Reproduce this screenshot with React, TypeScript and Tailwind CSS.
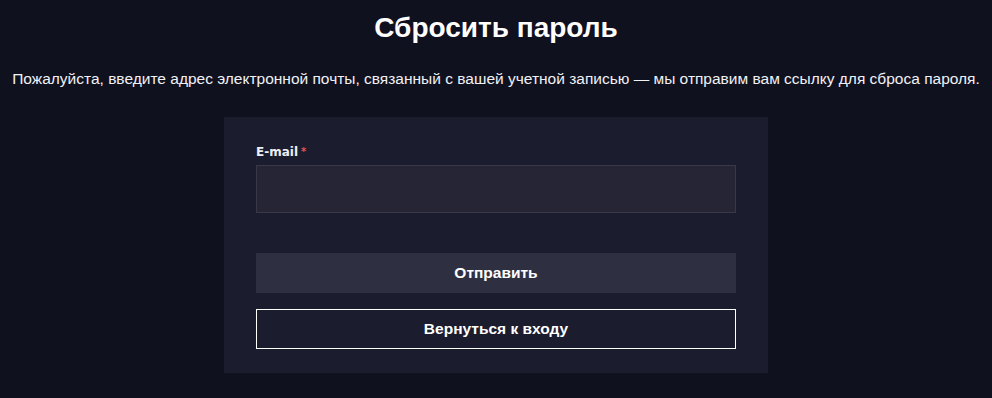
import React from "react";

export default function App() {
  return (
    <div className="min-h-screen bg-[#10111f] text-white font-['Liberation_Sans',Arial,sans-serif] flex flex-col items-center">
      <h1 className="mt-[11px] text-[28px] leading-[34px] font-bold">Сбросить пароль</h1>
      <p className="mt-[24px] text-[15.5px] leading-[20px] text-[#f1f1f5] whitespace-nowrap">
        Пожалуйста, введите адрес электронной почты, связанный с вашей учетной записью — мы отправим вам ссылку для сброса пароля.
      </p>
      <form className="mt-[28px] w-[544px] bg-[#1c1c2f] px-8 pt-[27px] pb-6 flex flex-col">
        <label className="text-[12px] leading-[16px] font-bold font-['DejaVu_Sans',sans-serif] text-[#eeeef5]">
          E-mail<span className="ml-[3px] text-[10px] align-top text-[#e05555]">*</span>
        </label>
        <input
          type="email"
          className="mt-[5px] h-12 bg-[#252536] border border-[#383849] outline-none"
        />
        <button
          type="button"
          className="mt-10 h-10 bg-[#2f2f42] text-[15.5px] font-bold text-white"
        >
          Отправить
        </button>
        <button
          type="button"
          className="mt-4 h-10 border border-white text-[15.5px] font-bold text-white"
        >
          Вернуться к входу
        </button>
      </form>
    </div>
  );
}
